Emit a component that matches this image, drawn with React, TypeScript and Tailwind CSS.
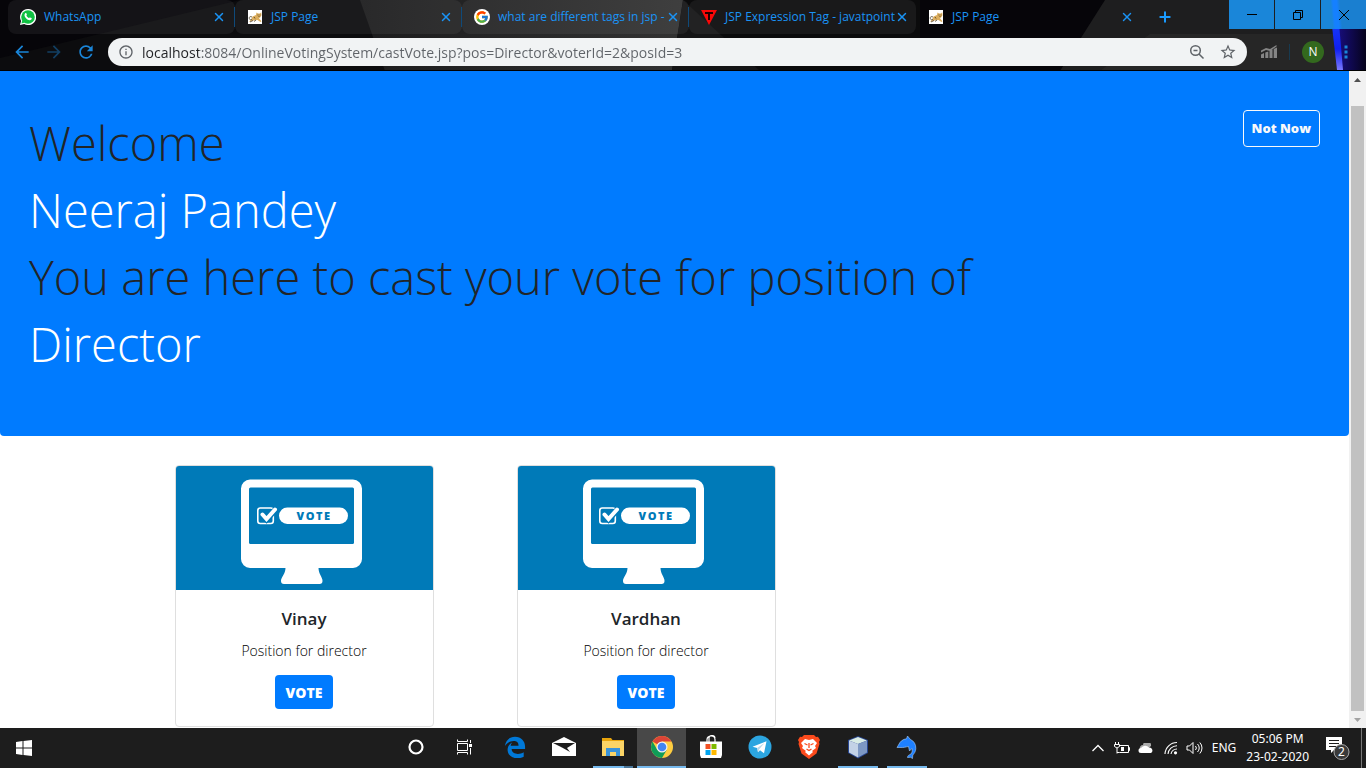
import React from "react";
import { X, Plus } from "lucide-react";
import { MdArrowBack, MdArrowForward, MdRefresh, MdInfoOutline, MdStarBorder } from "react-icons/md";
import { FcGoogle } from "react-icons/fc";

const strokes = "fill-none stroke-current";

function WhatsAppIcon() {
  return (
    <svg viewBox="0 0 16 16" className="size-4 shrink-0" aria-hidden="true">
      <path d="M8 0a8 8 0 0 0-6.900 12L0 16l4.200-1.100A8 8 0 1 0 8 0z" fill="#fff" />
      <circle cx="8" cy="8" r="6.800" fill="#10c143" />
      <path d="M1.400 14.600l1-3.600 2.600 2.600z" fill="#10c143" />
      <path d="M5.200 4.200c.5-.4 1-.3 1.200.2l.5 1.200c.1.400-.6.900-.5 1.200.5 1 1.300 1.800 2.300 2.300.4.100.9-.8 1.300-.7l1.500.7c.4.300.2 1-.2 1.500-1 1-2.500.7-4-.2C5.800 9.400 4.700 8 4.500 6.600c-.1-1 .2-1.900.7-2.400z" fill="#fff" />
    </svg>
  );
}

function TomcatIcon() {
  return (
    <svg viewBox="0 0 16 16" className="size-4 shrink-0" aria-hidden="true">
      <rect x="1" y="1" width="14" height="14" fill="#fff" />
      <path d="M2 13l2.500-3 1-2.500L9 6l.5-2.500L11 4.500h2L14.200 3.300l.3 3-1.200 2-1.300 1 2.500 3-1 .7-3-2-3 .3L5 12z" fill="#dcae5e" />
      <path d="M5 8C3 7 2 8 2.300 9.500S4 11 5 10M3 13l3-1.500M9 11l-2 1.500" fill="none" stroke="#4a4030" strokeWidth=".8" />
      <path d="M10.500 6h1M12.600 6h.8M11.500 7.500h1M7 8l1 1.500" stroke="#4a3a20" strokeWidth=".8" />
    </svg>
  );
}

function GoogleIcon() {
  return (
    <span className="flex size-4 shrink-0 items-center justify-center rounded-full bg-white">
      <FcGoogle className="size-3.5" />
    </span>
  );
}

function JavatpointIcon() {
  return (
    <svg viewBox="0 0 16 16" className="size-4 shrink-0" aria-hidden="true">
      <path d="M0 1h16L8 16z" fill="#f80808" />
      <path d="M4 3h8v2H9v6H7V5H4z" fill="#200" />
    </svg>
  );
}

const tabs = [
  { title: "WhatsApp", icon: <WhatsAppIcon />, look: "bg-white/6" },
  { title: "JSP Page", icon: <TomcatIcon />, look: "bg-white/6" },
  { title: "what are different tags in jsp -", icon: <GoogleIcon />, look: "bg-white/6" },
  { title: "JSP Expression Tag - javatpoint", icon: <JavatpointIcon />, look: "bg-white/6" },
  { title: "JSP Page", icon: <TomcatIcon />, look: "" },
];

function ThemeArt() {
  return (
    <svg viewBox="0 0 1366 71" preserveAspectRatio="none" className="absolute inset-0 size-full" aria-hidden="true">
      <defs>
        <linearGradient id="beam" x1="0" y1="0" x2="0" y2="1">
          <stop offset="0" stopColor="#1d50ff" />
          <stop offset=".7" stopColor="#1020f0" />
          <stop offset="1" stopColor="#7a78ff" />
        </linearGradient>
        <linearGradient id="grey" x1="0" y1="0" x2="1" y2="0">
          <stop offset="0" stopColor="#1c1c1d" />
          <stop offset="1" stopColor="#333333" />
        </linearGradient>
        <linearGradient id="glow" x1="0" y1="0" x2="1" y2="0">
          <stop offset="0" stopColor="#1a0f8a" />
          <stop offset="1" stopColor="#06031c" />
        </linearGradient>
      </defs>
      <rect width="1366" height="71" fill="#060509" />
      <path d="M0 58L240 0H700L672 71H0z" fill="#0c0c0e" />
      <path d="M360 0H690L672 71H385z" fill="url(#grey)" />
      <path d="M683 0H920V71H672z" fill="#0b0b0c" />
      <path d="M683 0L760 71H672z" fill="#151516" />
      <path d="M1105 0H1366V71H1060z" fill="#1e1e1f" />
      <path d="M1150 34H1366V71H1100z" fill="#262626" />
      <path d="M1334 0H1366V71H1340z" fill="url(#glow)" />
      <path d="M1329 0h8l6 70h-6z" fill="url(#beam)" />
      <path d="M0 70.500H1366" stroke="#000" />
    </svg>
  );
}

function BrowserChrome() {
  return (
    <header className="relative shrink-0 bg-black font-['Open_Sans','Noto_Sans',sans-serif]">
      <ThemeArt />
      <div className="relative flex h-[38px] items-start">
        <div className="flex min-w-0 pl-2">
          {tabs.map((t, i) => (
            <div key={i} className={`flex h-[34px] w-[227px] min-w-0 items-center rounded-lg pl-3 ${t.look}`}>
              {t.icon}
              <span className="ml-2 flex-1 text-[12px] whitespace-nowrap text-[#1a93f5]">{t.title}</span>
              <button aria-label={`Close ${t.title}`} className="mr-2 text-[#1a93f5]">
                <X className="size-3.5" strokeWidth={2.5} />
              </button>
              <span className={`h-5 w-px ${i < 3 ? "bg-[#0f4a7a]" : ""}`} />
            </div>
          ))}
        </div>
        <button aria-label="New tab" className="ml-3.5 flex h-[34px] items-center text-[#1a9bff]">
          <Plus className="size-4" strokeWidth={3} />
        </button>
        <div className="ml-auto flex gap-px">
          <button aria-label="Minimize" className="flex h-[29px] w-[45px] items-center justify-center bg-[#1a86d9]">
            <svg viewBox="0 0 12 12" className={`size-3 ${strokes}`}><path d="M1 5.500h10" /></svg>
          </button>
          <button aria-label="Restore" className="flex h-[29px] w-[45px] items-center justify-center bg-[#1a86d9]">
            <svg viewBox="0 0 12 12" className={`size-3 ${strokes}`}><path d="M1.500 3.500h7v7h-7zM3.500 3.500v-2h7v7h-2" /></svg>
          </button>
          <button aria-label="Close window" className="flex h-[29px] w-[45px] items-center justify-center bg-[linear-gradient(85deg,#1a86d9_25%,#1580ff_30%,#1580ff_38%,#1a7fd0_45%)]">
            <svg viewBox="0 0 12 12" className={`size-3 ${strokes}`}><path d="M1 1l10 10M11 1L1 11" /></svg>
          </button>
        </div>
      </div>
      <div className="relative flex h-[33px] items-start pr-3">
        <div className="flex h-7 w-[108px] shrink-0 items-center gap-3 pl-3 text-[#1a86d9]">
          <button aria-label="Back"><MdArrowBack className="size-5" /></button>
          <button aria-label="Forward" className="text-[#123f63]"><MdArrowForward className="size-5" /></button>
          <button aria-label="Reload"><MdRefresh className="size-5" /></button>
        </div>
        <div className="flex h-7 flex-1 items-center rounded-full bg-[#f1f3f4] px-2.5 text-[#5f6368]">
          <MdInfoOutline className="size-4 shrink-0" />
          <label htmlFor="address" className="sr-only">Address</label>
          <input
            id="address"
            className="ml-2 h-7 min-w-0 flex-1 bg-[linear-gradient(90deg,#202124_57px,#5f6368_57px)] bg-clip-text text-[14px] text-transparent outline-none"
            defaultValue="localhost:8084/OnlineVotingSystem/castVote.jsp?pos=Director&voterId=2&posId=3"
          />
          <svg viewBox="0 0 16 16" className={`size-4 ${strokes}`} aria-hidden="true">
            <circle cx="6.500" cy="6.500" r="4.800" strokeWidth="1.500" />
            <path d="M4.500 6.500h4M10 10l4.500 4.500" strokeWidth="1.500" />
          </svg>
          <MdStarBorder className="ml-3.5 size-[18px]" />
        </div>
        <div className="flex h-7 items-center">
          <svg viewBox="0 0 16 14" className="ml-3.5 h-3.5 w-4 fill-[#858585]" aria-hidden="true">
            <path d="M0 9.500l3-1.500V13H0zM4.300 7.500l3-1V13h-3zM8.500 6l3-1.500V13h-3zM12.700 4L16 2.500V13h-3.300zM0 5.500L5 3l4 1L15.500 0v1.500L9 6 5 5 0 7.500z" />
          </svg>
          <span className="mx-3 h-4 w-px bg-[#173a50]" />
          <button aria-label="Profile" className="flex size-[22px] items-center justify-center rounded-full bg-[#33691e] text-[12px] text-white">N</button>
          <button aria-label="Menu" className="ml-3.5">
            <svg viewBox="0 0 16 16" className="size-4 fill-[#1a86d9]"><path d="M6.500 1.500h3v3h-3zM6.500 6.500h3v3h-3zM6.500 11.500h3v3h-3z" /></svg>
          </button>
        </div>
      </div>
    </header>
  );
}

function VoteArt() {
  return (
    <svg viewBox="0 0 257 124" className="block w-full" role="img" aria-label="Vote on a computer">
      <rect width="257" height="124" fill="#007ab8" />
      <path d="M74 13.500H177a9 9 0 0 1 9 9V93a9 9 0 0 1-9 9H142.500c0 6 4 9 4 13a3 3 0 0 1-3 3H108a3 3 0 0 1-3-3c0-4 4.500-7 4.500-13H74a9 9 0 0 1-9-9V22.500a9 9 0 0 1 9-9z" fill="#fff" />
      <rect x="73" y="21.500" width="105" height="56.500" rx="1.500" fill="#007ab8" />
      <rect x="81.800" y="42" width="15.500" height="15.500" rx="2.500" fill="none" stroke="#fff" strokeWidth="1.600" />
      <path d="M85.500 48.500l5 5L101 42" fill="none" stroke="#007ab8" strokeWidth="6" />
      <path d="M86.500 48.500l4 4.500L99 43.500" fill="none" stroke="#fff" strokeWidth="4" strokeLinecap="round" />
      <rect x="103" y="41.500" width="69" height="16.500" rx="8.250" fill="#fff" />
      <text x="138" y="54" textAnchor="middle" fill="#007ab8" fontFamily="Open Sans, sans-serif" fontWeight="800" fontSize="11" letterSpacing="1.500">VOTE</text>
    </svg>
  );
}

function CandidateCard({ name }: { name: string }) {
  return (
    <div className="px-[13px]">
      <article className="w-[259px] overflow-hidden rounded border border-[#dfdfdf] bg-white">
        <VoteArt />
        <div className="flex flex-col items-center px-4 pt-[18px] pb-[17px] text-center">
          <h5 className="text-[17px] leading-[22px] font-semibold">{name}</h5>
          <p className="mt-2.5 text-[14px] leading-[22px] font-light text-black">Position for director</p>
          <button className="mt-[13px] h-[34px] rounded bg-[#007bff] px-[11px] text-[14px] font-extrabold text-white">VOTE</button>
        </div>
      </article>
    </div>
  );
}

function Page() {
  return (
    <div className="flex min-h-0 flex-1 bg-white">
      <main className="min-w-0 flex-1 overflow-hidden font-['Open_Sans','Noto_Sans',sans-serif] text-[#212529]">
        <section className="flex h-[365px] items-start justify-between rounded-b bg-[#007bff] pt-[39px] pr-[29px] pl-[29px]">
          <h1 className="text-[47px] leading-[67px] font-light">
            <span className="block">Welcome</span>
            <span className="block text-white">Neeraj Pandey</span>
            <span className="block">You are here to cast your vote for position of</span>
            <span className="block text-white">Director</span>
          </h1>
          <button className="h-[37px] shrink-0 rounded border border-[#f8f9fa] px-2 text-[13px] font-extrabold text-[#f8f9fa]">Not Now</button>
        </section>
        <div className="mx-auto mt-[29px] grid max-w-[1026px] grid-cols-3">
          <CandidateCard name="Vinay" />
          <CandidateCard name="Vardhan" />
        </div>
      </main>
      <div className="flex w-[17px] shrink-0 flex-col items-center bg-[#f1f1f1]" aria-hidden="true">
        <svg viewBox="0 0 17 17" className="size-[17px] shrink-0"><path d="M5 11l3.500-4 3.500 4z" fill="#505050" /></svg>
        <div className="mt-[18px] w-[13px] flex-1 bg-[#c1c1c1]" />
        <svg viewBox="0 0 17 17" className="size-[17px] shrink-0"><path d="M5 7l3.500 4L12 7z" fill="#a3a3a3" /></svg>
      </div>
    </div>
  );
}

function TaskButton({ label, children, look = "w-[49px]", bar = "" }: { label: string; children: React.ReactNode; look?: string; bar?: string }) {
  return (
    <button aria-label={label} className={`flex h-10 flex-col items-center ${look}`}>
      <span className="flex flex-1 items-center justify-center">{children}</span>
      <span className={`h-0.5 ${bar}`} />
    </button>
  );
}

function Taskbar() {
  return (
    <footer className="flex h-10 shrink-0 items-center bg-[#1d1d1d] font-['Noto_Sans','Open_Sans',sans-serif] text-white">
      <button aria-label="Start" className="flex w-12 justify-center">
        <svg viewBox="0 0 16 16" className="size-4 fill-white"><path d="M0 2l6.500-1v6.500H0zM7.500.9L16 0v7.500H7.500zM0 8.500h6.500V15L0 14zM7.500 8.500H16V16l-8.500-.9z" /></svg>
      </button>
      <div className="ml-[344px] flex">
        <TaskButton label="Search" look="w-12">
          <svg viewBox="0 0 18 18" className="size-[18px]"><circle cx="9" cy="9" r="6.500" fill="none" stroke="#fff" strokeWidth="2.200" /></svg>
        </TaskButton>
        <TaskButton label="Task view" look="w-12">
          <svg viewBox="0 0 18 18" className={`size-[18px] ${strokes}`}>
            <path d="M2.500 5.500h10v7h-10zM2.500 1.500v2h10v-2M2.500 16.500v-2h10v2M15.500 2v3M15.500 10v6.500" />
            <path d="M14 6h3v3h-3z" fill="#fff" stroke="none" />
          </svg>
        </TaskButton>
      </div>
      <div className="ml-0.5 flex">
        <TaskButton label="Edge">
          <svg viewBox="0 0 24 24" className="size-[22px]">
            <path d="M1 11C1.800 5 6 .8 12 .8c6.800 0 11 4.800 11 11v2.400H8.300c.3 6 8.500 6.600 13.200 3.500v4.800c-6 3.600-16.500 2-17.500-6.500-.5-4 1.800-7.500 5-9-1 1-1.500 2-1.700 3.700h8.500c.3-4-2.500-5.500-5.500-5.300C6.500 5.600 3 7.700 1 11z" fill="#0078d7" />
          </svg>
        </TaskButton>
        <TaskButton label="Mail">
          <svg viewBox="0 0 24 20" className="h-5 w-6"><path d="M0 6L12 0l12 6v13H0z" fill="#fff" /><path d="M1 6h22L15 11l3 4-8-4.500z" fill="#1d1d1d" /></svg>
        </TaskButton>
        <TaskButton label="File Explorer" bar="w-10 bg-[linear-gradient(90deg,#76b9ed_78%,#4a7699_78%)]">
          <svg viewBox="0 0 22 18" className="h-[18px] w-[22px]">
            <path d="M0 0h9l1.500 2H22v16H0z" fill="#e9a50c" />
            <path d="M0 3h22v15H0z" fill="#fbd466" />
            <path d="M4 10h14v8h-4v-4H8v4H4z" fill="#3a93d8" />
          </svg>
        </TaskButton>
        <TaskButton label="Chrome" look="w-[49px] bg-[#484848]" bar="w-full bg-[#76b9ed]">
          <svg viewBox="0 0 22 22" className="size-[22px]">
            <circle cx="11" cy="11" r="11" fill="#ffcd40" />
            <path d="M11 11L1.500 5.500A11 11 0 0 1 20.500 5.500H11z" fill="#db4437" />
            <path d="M1.500 5.500A11 11 0 0 0 11 22l4.800-8.300L11 16l-4.800-2.300z" fill="#0f9d58" />
            <circle cx="11" cy="11" r="5.500" fill="#f1f1f1" />
            <circle cx="11" cy="11" r="4.300" fill="#4285f4" />
          </svg>
        </TaskButton>
        <TaskButton label="Microsoft Store">
          <svg viewBox="0 0 24 24" className="size-6">
            <path d="M8 7V4.500a4 3.500 0 0 1 8 0V7M10 7V3a3 2.500 0 0 1 6 0" fill="none" stroke="#fff" strokeWidth="1.200" />
            <path d="M1 6.500h22V20l-1 3H2l-1-3z" fill="#fff" />
            <path d="M6.500 9h5v5h-5z" fill="#f25022" /><path d="M12.500 9h5v5h-5z" fill="#7fba00" />
            <path d="M6.500 15h5v5h-5z" fill="#00a4ef" /><path d="M12.500 15h5v5h-5z" fill="#ffb900" />
          </svg>
        </TaskButton>
        <TaskButton label="Telegram">
          <svg viewBox="0 0 24 24" className="size-6">
            <circle cx="12" cy="12" r="11.500" fill="#2ca5e0" />
            <path d="M4.500 11.800L18.500 6.300 16 18.300l-4-3-2 2-.8-4.300z" fill="#fff" />
            <path d="M9.200 13L16.500 8l-5.500 6.500-1 2.800z" fill="#b9d8ea" />
          </svg>
        </TaskButton>
        <TaskButton label="Brave">
          <svg viewBox="0 0 22 24" className="h-6 w-[22px]">
            <path d="M6 0h10l2 2 2-.3L22 5l-1 2 .5 2-3 9.500L11 24l-7.500-5.500L.5 9 1 7 0 5l2-3.300 2 .3z" fill="#fb4a1c" />
            <path d="M7 4l4 1 4-1 4 4-2 3 1 2-4 3 1 1-4 3.500L7 17l1-1-4-3 1-2-2-3z" fill="#fff" />
            <path d="M6.500 8.500L9.500 10M15.500 8.500L12.500 10M11 8v5M8.500 14L11 15.500 13.500 14" fill="none" stroke="#fb4a1c" strokeWidth="1.300" />
          </svg>
        </TaskButton>
        <TaskButton label="NetBeans" bar="w-10 bg-[#76b9ed]">
          <svg viewBox="0 0 22 24" className="h-6 w-[22px]">
            <path d="M11 1l10 4v13l-10 5.500L1 18V5z" fill="#27458f" />
            <path d="M11 2l9 3.500L11 9 2 5.500z" fill="#d9ece5" />
            <path d="M2 5.500L11 9v13.500L2 17.500z" fill="#c3d2e6" />
            <path d="M20 5.500L11 9v13.500l9-5z" fill="#7d98c3" />
          </svg>
        </TaskButton>
        <TaskButton label="MySQL" bar="w-10 bg-[#76b9ed]">
          <svg viewBox="0 0 24 24" className="size-6">
            <path d="M2 12.500l1.500-2.500C5 6.500 8 4 11.500 3.800L12.500 1l3 3.500c3.500 1.500 5.500 5 5.300 9-.1 3-1.500 5-3 6.500l-.3 3.500-2-1.200-3 .2c0-2 1.500-2.500 3.500-3.500 1.300-2 1.500-3.500.8-5.500l-2.300 2.500-1-4.500c-3 .5-5 1.300-8.500 1z" fill="#1e80ff" stroke="#a8cdf5" strokeWidth=".6" />
          </svg>
        </TaskButton>
      </div>
      <div className="ml-auto flex items-center">
        <svg viewBox="0 0 12 8" className={`h-2 w-3 ${strokes}`}><path d="M.5 7L6 1.500 11.500 7" strokeWidth="1.300" /></svg>
        <svg viewBox="0 0 16 12" className={`ml-2.5 h-3 w-4 ${strokes}`}><path d="M6 3.500h8.500v7h-9M14.500 5.500h1v3h-1M1.500 0v2.500M4.500 0v2.500M.5 2.500h5v2L3 6 .5 4.500zM3 6v5.500M3 10.500h2.500" /><path d="M7 5h3v4H7z" fill="#fff" stroke="none" /></svg>
        <svg viewBox="0 0 16 10" className="ml-2 h-2.5 w-4"><path d="M2 6a3 3 0 0 1 3-4 4 4 0 0 1 8 1l-6 5z" fill="#aaa" /><path d="M3 10a2.500 2.500 0 0 1 0-5 5 5 0 0 1 8-.5 3 3 0 0 1 2 5.500z" fill="#fff" /></svg>
        <svg viewBox="0 0 14 14" className={`ml-2.5 size-3.5 ${strokes}`}><path d="M1 13A12 12 0 0 1 13 1.500M4 13A9 9 0 0 1 13 4.700M7 13A6 6 0 0 1 13 8" strokeWidth="1.100" /><circle cx="11.500" cy="11.800" r="1.600" fill="#fff" stroke="none" /></svg>
        <svg viewBox="0 0 18 14" className={`ml-2 h-3.5 w-[18px] ${strokes}`}><path d="M1 5h2.500L7 1.500v11L3.500 9H1zM9.500 5a3 3 0 0 1 0 4M11.500 3a5.500 5.500 0 0 1 0 8M13.800 1.500a8 8 0 0 1 0 11" /></svg>
        <span className="ml-2 text-[12px]">ENG</span>
        <time className="ml-2.5 text-center text-[12px] leading-[18px]">05:06 PM<br />23-02-2020</time>
        <button aria-label="2 notifications" className="ml-4">
          <svg viewBox="0 0 26 26" className="size-[26px]">
            <path d="M1 2h16v13H9l-3 3v-3H1z" fill="#fff" />
            <path d="M4 5.500h10M4 8.500h10M4 11.500h10" stroke="#1d1d1d" />
            <circle cx="16.500" cy="17" r="7.500" fill="#3a3a3a" stroke="#aaa" />
            <text x="16.500" y="21" textAnchor="middle" fill="#fff" fontFamily="Noto Sans, sans-serif" fontSize="12">2</text>
          </svg>
        </button>
        <span className="mr-1 ml-2.5 h-10 w-px bg-[#777]" />
      </div>
    </footer>
  );
}

export default function App() {
  return (
    <div className="flex h-screen flex-col overflow-hidden">
      <BrowserChrome />
      <Page />
      <Taskbar />
    </div>
  );
}
